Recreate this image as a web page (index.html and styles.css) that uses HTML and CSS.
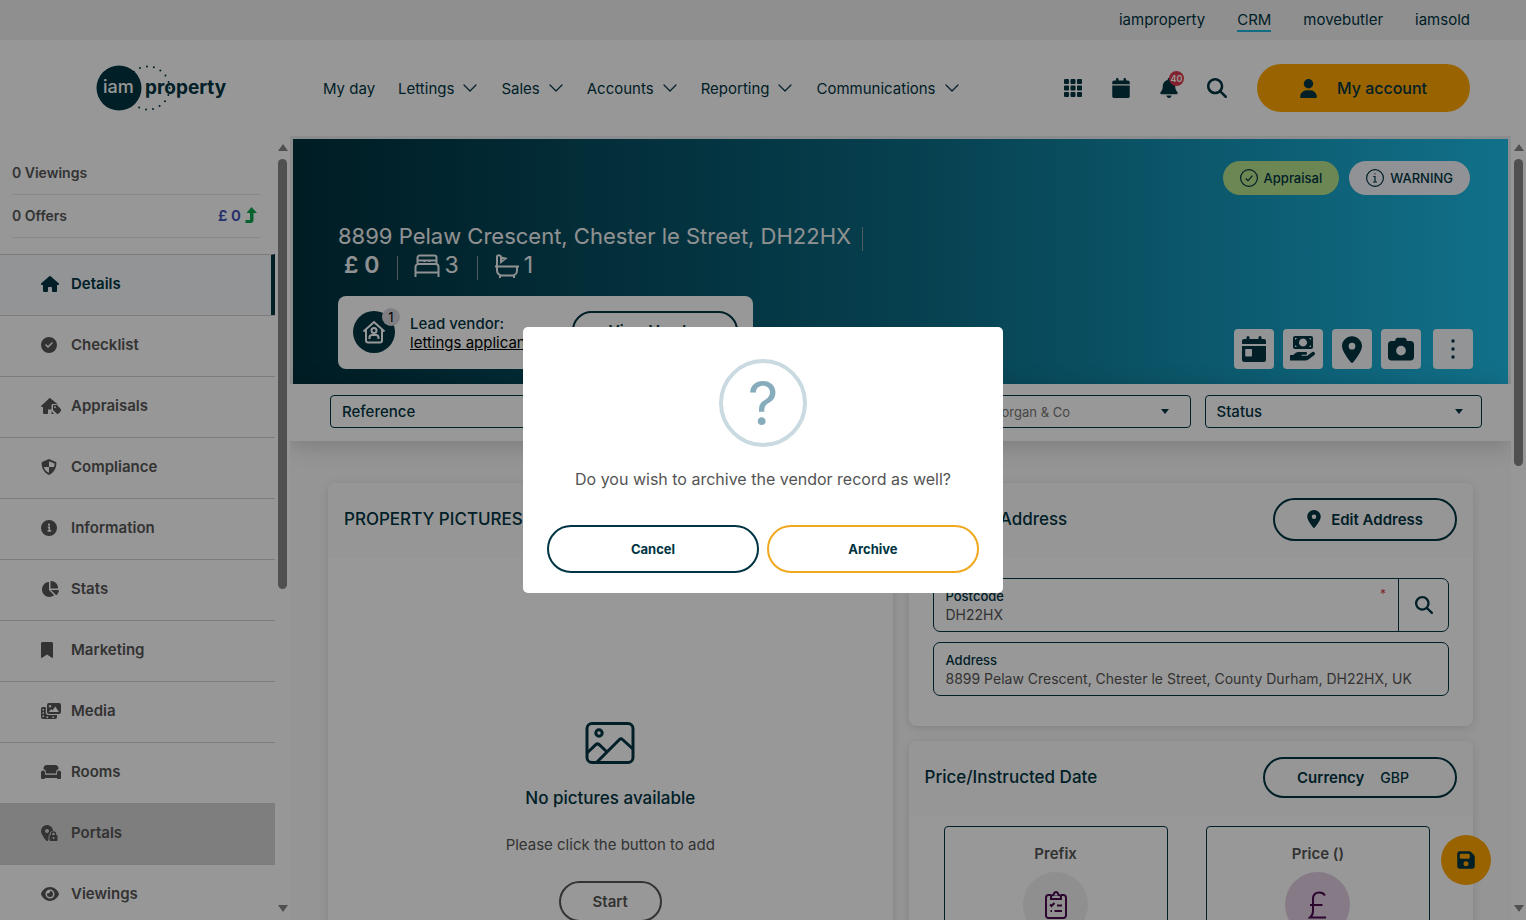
FILE: index.html
```html
<!DOCTYPE html>
<html lang="en">
  <head>
    <meta charset="UTF-8" />
    <meta name="viewport" content="width=device-width, initial-scale=1.0" />
    <title>Property Details - iamproperty CRM</title>
    <link rel="stylesheet" href="styles.css" />
  </head>
  <body>
    <svg class="sprite" aria-hidden="true">
      <symbol id="pin" viewBox="0 0 384 512"><path d="M215.7 499.2C267 435 384 279.4 384 192C384 86 298 0 192 0S0 86 0 192c0 87.4 117 243 168.3 307.2c12.3 15.3 35.1 15.3 47.4 0zM192 128a64 64 0 1 1 0 128 64 64 0 1 1 0-128z" /></symbol>
      <symbol id="search" viewBox="0 0 512 512"><path d="M416 208c0 45.9-14.9 88.3-40 122.7L502.6 457.4c12.5 12.5 12.5 32.8 0 45.3s-32.8 12.5-45.3 0L330.7 376c-34.4 25.2-76.8 40-122.7 40C93.1 416 0 322.9 0 208S93.1 0 208 0S416 93.1 416 208zM208 352a144 144 0 1 0 0-288 144 144 0 1 0 0 288z" /></symbol>
      <symbol id="chevron" viewBox="0 0 16 16"><path d="M2 5l6 6 6-6" fill="none" stroke="currentColor" stroke-width="1.2" stroke-linecap="round" stroke-linejoin="round" /></symbol>
    </svg>

    <div class="app">
      <nav class="topbar" aria-label="Sites">
        <a href="#">iamproperty</a>
        <a href="#" class="current">CRM</a>
        <a href="#">movebutler</a>
        <a href="#">iamsold</a>
      </nav>

      <header class="header">
        <a href="#" class="logo" aria-label="iamproperty">
          <svg width="134" height="48" viewBox="0 0 134 48">
            <circle cx="52" cy="24" r="21.5" fill="none" stroke="currentColor" stroke-width="2" stroke-linecap="round" stroke-dasharray="0 7.11" />
            <circle cx="23" cy="24" r="22.5" fill="currentColor" />
            <text x="7" y="29" class="logo-iam">iam</text>
            <text x="49" y="30" class="logo-property">property</text>
          </svg>
        </a>
        <nav class="main-nav" aria-label="Main">
          <a href="#">My day</a>
          <a href="#">Lettings <svg><use href="#chevron" /></svg></a>
          <a href="#">Sales <svg><use href="#chevron" /></svg></a>
          <a href="#">Accounts <svg><use href="#chevron" /></svg></a>
          <a href="#">Reporting <svg><use href="#chevron" /></svg></a>
          <a href="#">Communications <svg><use href="#chevron" /></svg></a>
        </nav>
        <div class="tools">
          <button type="button" aria-label="Apps">
            <svg width="18" height="18" viewBox="0 0 18 18"><path d="M1 0h3a1 1 0 0 1 1 1v3a1 1 0 0 1-1 1H1a1 1 0 0 1-1-1V1a1 1 0 0 1 1-1zM7.500 0h3a1 1 0 0 1 1 1v3a1 1 0 0 1-1 1h-3a1 1 0 0 1-1-1V1a1 1 0 0 1 1-1zM14 0h3a1 1 0 0 1 1 1v3a1 1 0 0 1-1 1h-3a1 1 0 0 1-1-1V1a1 1 0 0 1 1-1zM1 6.500h3a1 1 0 0 1 1 1v3a1 1 0 0 1-1 1H1a1 1 0 0 1-1-1v-3a1 1 0 0 1 1-1zM7.500 6.500h3a1 1 0 0 1 1 1v3a1 1 0 0 1-1 1h-3a1 1 0 0 1-1-1v-3a1 1 0 0 1 1-1zM14 6.500h3a1 1 0 0 1 1 1v3a1 1 0 0 1-1 1h-3a1 1 0 0 1-1-1v-3a1 1 0 0 1 1-1zM1 13h3a1 1 0 0 1 1 1v3a1 1 0 0 1-1 1H1a1 1 0 0 1-1-1v-3a1 1 0 0 1 1-1zM7.500 13h3a1 1 0 0 1 1 1v3a1 1 0 0 1-1 1h-3a1 1 0 0 1-1-1v-3a1 1 0 0 1 1-1zM14 13h3a1 1 0 0 1 1 1v3a1 1 0 0 1-1 1h-3a1 1 0 0 1-1-1v-3a1 1 0 0 1 1-1z" /></svg>
          </button>
          <button type="button" aria-label="Calendar">
            <svg width="18" height="20" viewBox="0 0 448 512"><path d="M96 32V64H48C21.500 64 0 85.500 0 112v48H448V112c0-26.500-21.500-48-48-48H352V32c0-17.700-14.300-32-32-32s-32 14.300-32 32V64H160V32c0-17.700-14.300-32-32-32S96 14.300 96 32zM448 192H0V464c0 26.500 21.500 48 48 48H400c26.500 0 48-21.500 48-48V192z" /></svg>
          </button>
          <button type="button" class="bell" aria-label="Notifications">
            <svg width="18" height="20" viewBox="0 0 448 512"><path d="M224 0c-17.700 0-32 14.300-32 32V51.200C119 66 64 130.600 64 208v18.800c0 47-17.300 92.400-48.500 127.600l-7.400 8.300c-8.400 9.400-10.400 22.900-5.300 34.400S19.400 416 32 416H416c12.600 0 24-7.400 29.200-18.900s3.100-25-5.300-34.400l-7.400-8.300C401.300 319.200 384 273.900 384 226.800V208c0-77.400-55-142-128-156.800V32c0-17.700-14.300-32-32-32zm45.300 493.300c12-12 18.700-28.300 18.700-45.300H224 160c0 17 6.700 33.300 18.700 45.300s28.300 18.700 45.300 18.700s33.300-6.700 45.300-18.700z" /></svg>
            <span class="bell-count">40</span>
          </button>
          <button type="button" aria-label="Search">
            <svg width="20" height="20"><use href="#search" /></svg>
          </button>
        </div>
        <button type="button" class="account">
          <svg width="17" height="19" viewBox="0 0 448 512"><path d="M224 256A128 128 0 1 0 224 0a128 128 0 1 0 0 256zm-45.700 48C79.800 304 0 383.800 0 482.300C0 498.700 13.300 512 29.700 512H418.300c16.400 0 29.700-13.300 29.700-29.700C448 383.800 368.200 304 269.700 304H178.300z" /></svg>
          My account
        </button>
      </header>

      <div class="layout">
        <aside class="sidebar">
          <div class="stats">
            <div class="stat">0 Viewings</div>
            <div class="stat">
              0 Offers
              <span class="stat-value">£ 0
                <svg width="12" height="16" viewBox="0 0 12 16"><path d="M6.500 0L12 6H8.500v7a3 3 0 0 1-3 3H0.500v-3H5V6H1.500z" /></svg>
              </span>
            </div>
          </div>
          <nav class="side-nav" aria-label="Property">
            <a href="#" class="active">
              <svg width="18" height="16" viewBox="0 0 576 512"><path d="M575.800 255.500c0 18-15 32.100-32 32.100h-32l.7 200.300c0 13-10 24-24 24H392c-22 0-40-18-40-40v-88c0-17.700-14.300-32-32-32h-64c-17.700 0-32 14.300-32 32v88c0 22-18 40-40 40H104c-22 0-40-18-40-40V287.600H32c-18 0-32-14-32-32.100c0-9 3-17 10-24L266.400 8c7-7 15-8 22-8s15 2 21 7L564.800 231.500c8 7 12 15 11 24z" /></svg>
              Details
            </a>
            <a href="#">
              <svg width="16" height="16" viewBox="0 0 512 512"><path d="M256 512A256 256 0 1 0 256 0a256 256 0 1 0 0 512zM369 209L241 337c-9.400 9.400-24.600 9.400-33.900 0l-64-64c-9.400-9.400-9.400-24.600 0-33.900s24.600-9.400 33.900 0l47 47L335 175c9.400-9.400 24.600-9.400 33.900 0s9.400 24.600 0 33.900z" /></svg>
              Checklist
            </a>
            <a href="#">
              <svg width="20" height="16" viewBox="0 0 20 16"><path d="M9 0l8 6.500-2.500-.5h-3.300L10.500 7v6l2.500 3h-1.500c-.6 0-1-.4-1-1v-3.500H7V15c0 .6-.4 1-1 1H3.300c-.7 0-1.300-.6-1.300-1.300V9H.7C0 9 0 8 .3 7.700L8 .5c.3-.4.700-.5 1-.5z" /><path d="M12 7h4l4 4.200c.5.600.5 1.200 0 1.700L17.300 15.700c-.5.4-1 .4-1.500 0L12 12zm2 1.200a.9.900 0 1 0 .01 0z" fill-rule="evenodd" /></svg>
              Appraisals
            </a>
            <a href="#">
              <svg width="16" height="16" viewBox="0 0 16 16"><path fill-rule="evenodd" d="M8 0l6.400 2.700c.6.200 1 .8 1 1.500C15.300 8.500 13.500 13.500 8 16 2.500 13.500.7 8.500.6 4.200c0-.7.4-1.300 1-1.500zM8 2.200V8H2.900c.5 2.300 2.100 4.500 5.100 5.800V8h5.100c.3-1.200.4-2.300.4-3.600z" /></svg>
              Compliance
            </a>
            <a href="#">
              <svg width="16" height="16" viewBox="0 0 16 16"><path fill-rule="evenodd" d="M8 0a8 8 0 1 1 0 16A8 8 0 0 1 8 0zM6.800 6.500v1.400h.7v2.300h-1v1.500h3.800v-1.500H9.100V6.500zM8 3.500a1.100 1.100 0 1 0 .01 0z" /></svg>
              Information
            </a>
            <a href="#">
              <svg width="18" height="16" viewBox="0 0 576 512"><path d="M304 240V16.600c0-9 7-16.600 16-16.600C443.700 0 544 100.300 544 224c0 9-7.600 16-16.600 16H304zM32 272C32 150.700 122.100 50.300 239 34.300c9.200-1.300 17 6.100 17 15.400V288L412.500 444.500c6.700 6.700 6.200 17.700-1.500 23.100C371.800 495.600 323.800 512 272 512C139.500 512 32 404.600 32 272zm526.400 16c9.300 0 16.600 7.800 15.400 17c-7.700 55.900-34.600 105.600-73.900 142.300c-6 5.600-15.400 5.200-21.200-.7L320 288H558.400z" /></svg>
              Stats
            </a>
            <a href="#">
              <svg width="12" height="16" viewBox="0 0 384 512"><path d="M0 48V487.700C0 501.100 10.900 512 24.300 512c5 0 9.900-1.500 14-4.400L192 400 345.700 507.600c4.100 2.900 9 4.400 14 4.400c13.400 0 24.300-10.900 24.300-24.300V48c0-26.500-21.500-48-48-48H48C21.500 0 0 21.500 0 48z" /></svg>
              Marketing
            </a>
            <a href="#">
              <svg width="20" height="16" viewBox="0 0 20 16"><path fill-rule="evenodd" d="M8 0h10a2 2 0 0 1 2 2v7a2 2 0 0 1-2 2H8a2 2 0 0 1-2-2V2a2 2 0 0 1 2-2zm-.2 9H18l-3.700-5.600-2.800 4-1.200-1.300zM9 2a1.200 1.200 0 1 0 .01 0z" /><path fill-rule="evenodd" d="M2 4h2.800v5.500A2.500 2.500 0 0 0 7.300 12H16v2a2 2 0 0 1-2 2H2a2 2 0 0 1-2-2V6a2 2 0 0 1 2-2zm-.5 2v1.500H3V6zm0 3.200v1.500H3V9.200zm0 3.300V14H3v-1.500zm4 1V15H7v-1.500zm6 0V15H13v-1.500z" /></svg>
              Media
            </a>
            <a href="#">
              <svg width="20" height="16" viewBox="0 0 20 16"><path d="M6 1h8a3.500 3.500 0 0 1 3.500 3.500v.8c-1.400.2-2.300 1.200-2.300 2.700v1.500H4.800V8c0-1.500-.9-2.500-2.300-2.700v-.8A3.500 3.500 0 0 1 6 1z" /><path d="M2 6.500a2 2 0 0 1 2 2v2.200h12V8.500a2 2 0 1 1 4 0V14a1 1 0 0 1-1 1h-2a1 1 0 0 1-1-1H4a1 1 0 0 1-1 1H1a1 1 0 0 1-1-1V8.500a2 2 0 0 1 2-2z" /></svg>
              Rooms
            </a>
            <a href="#" class="hovered">
              <svg width="17" height="16" viewBox="0 0 17 16"><path fill-rule="evenodd" d="M6 0a6 6 0 0 1 6 5.700c-2 .2-3.200 1.700-3.200 3.500C8 9.600 7.600 10.200 7.600 11v3.600l-.9 1.100c-.4.400-1 .4-1.400 0C3.500 13.500 0 8.800 0 6a6 6 0 0 1 6-6zm0 4a2 2 0 1 0 .01 0z" /><path fill-rule="evenodd" d="M9.800 10V9a2.700 2.700 0 0 1 5.400 0v1h.3c.6 0 1 .4 1 1v4c0 .6-.4 1-1 1h-6c-.6 0-1-.4-1-1v-4c0-.6.400-1 1-1zm1.400 0h2.600V9a1.300 1.300 0 0 0-2.600 0zm1.300 2a1 1 0 1 0 .01 0z" /></svg>
              Portals
            </a>
            <a href="#">
              <svg width="18" height="16" viewBox="0 0 18 16"><path fill-rule="evenodd" d="M9 1c4.500 0 7.500 3.300 8.900 6.400.1.400.1.800 0 1.200C16.500 11.700 13.500 15 9 15S1.500 11.700.1 8.600a1.600 1.600 0 0 1 0-1.200C1.500 4.300 4.500 1 9 1zm0 2.500a4.500 4.500 0 1 0 0 9 4.500 4.500 0 0 0 0-9zM9 5a3 3 0 1 1-2.900 2.200A2 2 0 0 0 9 5z" /></svg>
              Viewings
            </a>
          </nav>
        </aside>
        <div class="rail" aria-hidden="true">
          <span class="rail-up"></span>
          <span class="rail-thumb rail-thumb-long"></span>
          <span class="rail-down"></span>
        </div>

        <main class="main">
          <section class="hero">
            <div class="pills">
              <span class="pill pill-green">
                <svg width="18" height="18" viewBox="0 0 18 18"><circle cx="9" cy="9" r="8.400" /><path d="M5.700 9.500l2.300 2.200 4.500-5" /></svg>
                Appraisal
              </span>
              <span class="pill">
                <svg width="18" height="18" viewBox="0 0 18 18"><circle cx="9" cy="9" r="8.400" /><path d="M7.300 7.500H9V13M7 13h4M8.900 4.300v1" /></svg>
                WARNING
              </span>
            </div>
            <h1 class="address">8899 Pelaw Crescent, Chester le Street, DH22HX</h1>
            <ul class="facts">
              <li class="price">£ 0</li>
              <li>
                <svg width="26" height="24" viewBox="0 0 26 24"><path d="M3.500 10V3.500a2 2 0 0 1 2-2h15a2 2 0 0 1 2 2V10M1.500 23V13a3 3 0 0 1 3-3h17a3 3 0 0 1 3 3v10M1.500 18.500h23M3.500 6.500h19M10.500 6.500V8M15.500 6.500V8" /></svg>
                3
              </li>
              <li>
                <svg width="26" height="24" viewBox="0 0 26 24"><path d="M1 12.500h24M3 12.500v4a5 5 0 0 0 5 5h10a5 5 0 0 0 5-5v-4M6 21.500V24M20 21.500V24M3 12.500V3c0-2.500 3.500-2.500 4 0M7 8V3.500l4.500 1z" /></svg>
                1
              </li>
            </ul>
            <div class="hero-row">
              <div class="vendor">
                <span class="vendor-icon">
                  <svg width="24" height="24" viewBox="0 0 24 24"><path d="M1.500 11.500L12 2l10.500 9.500M4 9.500v11a2 2 0 0 0 2 2h12a2 2 0 0 0 2-2v-11M7.500 19v-1.500a2.500 2.500 0 0 1 2.500-2.500h4a2.500 2.500 0 0 1 2.500 2.500V19" /><circle cx="12" cy="10.500" r="2.500" /></svg>
                  <span class="vendor-count">1</span>
                </span>
                <div class="vendor-text">
                  Lead vendor:<br />
                  <a href="#">lettings applicant</a>
                </div>
                <button type="button" class="outline vendor-button">View Vendor</button>
              </div>
              <div class="actions">
                <button type="button" aria-label="Book appointment">
                  <svg width="24" height="26" viewBox="0 0 24 26"><path d="M6 0a1.500 1.500 0 0 1 1.500 1.500V3h9V1.500a1.500 1.500 0 0 1 3 0V3H22a2 2 0 0 1 2 2v3H0V5a2 2 0 0 1 2-2h2.500V1.500A1.500 1.500 0 0 1 6 0z" /><path fill-rule="evenodd" d="M0 10h24v13.500a2.500 2.500 0 0 1-2.500 2.500h-19A2.500 2.500 0 0 1 0 23.500zm4 3a.8.800 0 0 0-.8.800v5.900c0 .4.400.8.800.8h5.200c.4 0 .8-.4.800-.8v-5.900c0-.4-.4-.8-.8-.8z" /></svg>
                </button>
                <button type="button" aria-label="Offers">
                  <svg width="26" height="26" viewBox="0 0 26 26"><path fill-rule="evenodd" d="M5 0h16a2 2 0 0 1 2 2v9a2 2 0 0 1-2 2H5a2 2 0 0 1-2-2V2a2 2 0 0 1 2-2zm8 2.500a4 4 0 1 0 .01 0zM5 2v2l2-2zm16 0h-2l2 2zM5 11h2L5 9zm16 0V9l-2 2z" /><path d="M0 19h3.200l2.300-1.900a5 5 0 0 1 3.200-1.100h7a1.400 1.400 0 0 1 0 2.800h-4v.9h5.600l5-3.600a1.800 1.800 0 0 1 2.100 2.900l-6 4.400a5 5 0 0 1-3 1H0z" /></svg>
                </button>
                <button type="button" aria-label="Location">
                  <svg width="20" height="27"><use href="#pin" /></svg>
                </button>
                <button type="button" aria-label="Photos">
                  <svg width="26" height="26" viewBox="0 0 512 512"><path d="M149.100 64.800L138.700 96H64C28.700 96 0 124.700 0 160V416c0 35.300 28.700 64 64 64H448c35.300 0 64-28.700 64-64V160c0-35.300-28.700-64-64-64H373.300L362.900 64.800C356.400 45.200 338.100 32 317.400 32H194.600c-20.700 0-39 13.200-45.500 32.800zM256 192a96 96 0 1 1 0 192 96 96 0 1 1 0-192z" /></svg>
                </button>
                <button type="button" class="more" aria-label="More">
                  <svg width="4" height="20" viewBox="0 0 4 20"><circle cx="2" cy="2" r="1.700" /><circle cx="2" cy="10" r="1.700" /><circle cx="2" cy="18" r="1.700" /></svg>
                </button>
              </div>
            </div>
          </section>

          <div class="filters">
            <select aria-label="Reference"><option>Reference</option></select>
            <select aria-label="Type"><option>Type</option></select>
            <div class="filter-field">
              <label for="branch">Branch</label>
              <select id="branch"><option>Morgan &amp; Co</option></select>
            </div>
            <select aria-label="Status"><option>Status</option></select>
          </div>

          <div class="content">
            <section class="card pictures">
              <div class="card-head"><h2>PROPERTY PICTURES</h2></div>
              <div class="empty">
                <svg width="50" height="42" viewBox="0 0 50 42"><rect x="2" y="1.500" width="46" height="39" rx="5" /><circle cx="14" cy="11" r="3.200" /><path d="M2 31l9-8.500c1-.8 2-.8 3 0l7 6.500M12 40l22.500-22.500c1-1 2-1 3 0L48 27" /></svg>
                <h3>No pictures available</h3>
                <p>Please click the button to add</p>
                <button type="button" class="outline start">Start</button>
              </div>
            </section>

            <div class="column">
              <section class="card">
                <div class="card-head">
                  <h2>Property Address</h2>
                  <button type="button" class="outline edit-address">
                    <svg width="14" height="18"><use href="#pin" /></svg>
                    Edit Address
                  </button>
                </div>
                <div class="fields">
                  <div class="field-group">
                    <div class="field">
                      <label for="postcode">Postcode</label>
                      <input type="text" id="postcode" value="DH22HX" />
                      <span class="required">*</span>
                    </div>
                    <button type="button" aria-label="Find address">
                      <svg width="18" height="18"><use href="#search" /></svg>
                    </button>
                  </div>
                  <div class="field-group">
                    <div class="field">
                      <label for="address">Address</label>
                      <input type="text" id="address" value="8899 Pelaw Crescent, Chester le Street, County Durham, DH22HX, UK" />
                    </div>
                  </div>
                </div>
              </section>

              <section class="card">
                <div class="card-head">
                  <h2>Price/Instructed Date</h2>
                  <button type="button" class="outline currency">Currency <span>GBP</span></button>
                </div>
                <div class="tiles">
                  <div class="tile">
                    <h3>Prefix</h3>
                    <span class="tile-icon">
                      <svg width="22" height="28" viewBox="0 0 22 28"><path d="M6 4H3.500A2.500 2.500 0 0 0 1 6.500v18A2.500 2.500 0 0 0 3.500 27h15a2.500 2.500 0 0 0 2.500-2.500v-18A2.500 2.500 0 0 0 18.500 4H16M6 8V6c0-1.500 1-2 2.500-2C9 2 10 1 11 1s2 1 2.500 3c1.500 0 2.500.5 2.500 2v2zM11 4.500v.5M5 13.500l1.500 1.500 3-3M12 14.500h5M5.500 20h1.500M9.500 20H17" /></svg>
                    </span>
                  </div>
                  <div class="tile">
                    <h3>Price ()</h3>
                    <span class="tile-icon tile-icon-pink">
                      <svg width="20" height="28" viewBox="0 0 20 28"><path d="M17 4.500C15.500 2 13.500 1.500 11.500 1.500 7.500 1.500 5 4 5 8v12c0 3-1 5-3 6.500h16M2 14h12.500" /></svg>
                    </span>
                  </div>
                </div>
              </section>
            </div>
          </div>
        </main>
        <div class="rail" aria-hidden="true">
          <span class="rail-up"></span>
          <span class="rail-thumb"></span>
          <span class="rail-down"></span>
        </div>
      </div>

      <button type="button" class="save" aria-label="Save">
        <svg width="18" height="20" viewBox="0 0 448 512"><path d="M64 32C28.700 32 0 60.700 0 96V416c0 35.300 28.700 64 64 64H384c35.300 0 64-28.700 64-64V173.300c0-17-6.700-33.300-18.700-45.300L352 50.700C340 38.700 323.700 32 306.700 32H64zm0 96c0-17.700 14.300-32 32-32H288c17.700 0 32 14.300 32 32v64c0 17.700-14.300 32-32 32H96c-17.700 0-32-14.300-32-32V128zM224 288a64 64 0 1 1 0 128 64 64 0 1 1 0-128z" /></svg>
      </button>
    </div>

    <div class="overlay">
      <div class="modal" role="dialog" aria-modal="true" aria-labelledby="modal-text">
        <div class="modal-icon">?</div>
        <p id="modal-text">Do you wish to archive the vendor record as well?</p>
        <div class="modal-buttons">
          <button type="button">Cancel</button>
          <button type="button" class="archive">Archive</button>
        </div>
      </div>
    </div>
  </body>
</html>
```
FILE: styles.css
```css
:root {
  --navy: #003442;
  --orange: #ffa600;
  --text: #555555;
  --line: #cfcfcf;
  --pill: 24px;
}

* {
  margin: 0;
  padding: 0;
  box-sizing: border-box;
}

body {
  font-family: Inter, "Open Sans", sans-serif;
  font-size: 15px;
  color: var(--navy);
  background: #fcfcfc;
  overflow: hidden;
}

a {
  color: inherit;
  text-decoration: none;
}

button,
input,
select {
  font: inherit;
  color: inherit;
}

button {
  display: flex;
  align-items: center;
  justify-content: center;
  background: none;
  border: none;
  cursor: pointer;
}

svg {
  fill: currentColor;
  flex-shrink: 0;
}

.sprite {
  display: none;
}

.app {
  display: flex;
  flex-direction: column;
  height: 100vh;
}

/* Top bars */
.topbar {
  display: flex;
  justify-content: flex-end;
  align-items: center;
  gap: 32px;
  height: 40px;
  flex-shrink: 0;
  padding: 0 56px;
  background: #eeeeee;
}

.topbar a {
  padding-top: 2px;
  line-height: 20px;
  border-bottom: 2px solid transparent;
}

.topbar .current {
  border-color: #1eb4dc;
}

.header {
  display: flex;
  align-items: center;
  height: 96px;
  flex-shrink: 0;
  padding: 0 56px 0 96px;
}

.logo {
  display: flex;
}

.logo-iam {
  font-size: 18px;
  font-weight: 500;
  fill: #fcfcfc;
}

.logo-property {
  font-size: 19px;
  font-weight: 700;
}

.main-nav {
  display: flex;
  gap: 23px;
  margin-left: 93px;
}

.main-nav a {
  display: flex;
  align-items: center;
  gap: 8px;
}

.main-nav svg {
  width: 16px;
  height: 16px;
}

.tools {
  display: flex;
  gap: 28px;
  margin-left: auto;
}

.tools button {
  width: 20px;
  height: 24px;
}

.bell {
  position: relative;
}

.bell-count {
  position: absolute;
  top: -5px;
  left: 10px;
  width: 15px;
  border-radius: 50%;
  background: #d83a4e;
  color: #ffffff;
  font-size: 9px;
  font-weight: 600;
  line-height: 15px;
}

.account {
  gap: 20px;
  width: 213px;
  height: 48px;
  margin-left: 30px;
  border-radius: var(--pill);
  background: var(--orange);
  font-size: 16px;
  font-weight: 500;
}

/* Sidebar */
.layout {
  display: flex;
  flex: 1;
  min-height: 0;
}

.sidebar {
  width: 275px;
  flex-shrink: 0;
  overflow: hidden;
  color: var(--text);
  font-weight: 600;
}

.stats {
  padding: 16px 14px 16px 12px;
}

.stat {
  display: flex;
  align-items: center;
  justify-content: space-between;
  height: 43px;
  padding-bottom: 2px;
  border-bottom: 1px solid #e4e4e4;
  font-size: 14px;
}

.stat-value {
  display: flex;
  align-items: center;
  gap: 4px;
  padding-right: 4px;
  color: #3d50b0;
  font-size: 15px;
}

.stat-value svg {
  color: #0aa64e;
}

.side-nav a {
  display: grid;
  grid-template-columns: 30px 1fr;
  align-items: center;
  height: 61px;
  padding: 0 0 3px 41px;
  border-top: 1px solid var(--line);
}

.side-nav .active {
  color: var(--navy);
  background: #f5f7f9;
  border-right: 4px solid var(--navy);
}

.side-nav .hovered {
  background: #d3d3d3;
}

.rail {
  display: flex;
  flex-direction: column;
  align-items: center;
  width: 15px;
  flex-shrink: 0;
  padding: 8px 3px;
}

.rail-up,
.rail-down {
  border: 5px solid transparent;
}

.rail-up {
  border-top: none;
  border-bottom: 7px solid #858585;
}

.rail-down {
  margin-top: auto;
  border-bottom: none;
  border-top: 7px solid #858585;
}

.rail-thumb {
  width: 9px;
  height: 40%;
  margin-top: 8px;
  border-radius: 5px;
  background: #858585;
}

.rail-thumb-long {
  height: 56%;
}

/* Property banner */
.main {
  flex: 1;
  min-width: 0;
  overflow: hidden;
  background: #f8f8f8;
}

.hero {
  padding: 22px 35px 15px 45px;
  border: 3px solid #e6eaeb;
  border-bottom-width: 0;
  background: linear-gradient(90deg, #00303c, #0b6a83 50%, #1dbce6) padding-box;
  color: #f0f2f3;
}

.pills {
  display: flex;
  justify-content: flex-end;
  gap: 10px;
  padding-right: 3px;
}

.pill {
  display: flex;
  align-items: center;
  gap: 6px;
  height: 34px;
  padding: 0 17px;
  border-radius: 17px;
  background: #f2f4f8;
  color: var(--navy);
  font-size: 13px;
  font-weight: 500;
}

.pill-green {
  background: #b4e08c;
}

.pill svg {
  fill: none;
  stroke: currentColor;
  stroke-width: 1.2;
}

.address {
  width: fit-content;
  margin-top: 27px;
  padding-right: 12px;
  background: linear-gradient(#8799a0, #8799a0) right bottom / 1px 24px no-repeat;
  font-size: 22px;
  font-weight: 400;
  line-height: 29px;
}

.facts {
  display: flex;
  list-style: none;
  padding-left: 6px;
  font-size: 23px;
  line-height: 29px;
}

.facts li {
  display: flex;
  align-items: center;
  gap: 4px;
  padding-right: 18px;
}

.facts li + li {
  padding-left: 17px;
  background: linear-gradient(#8799a0, #8799a0) left bottom / 1px 24px no-repeat;
}

.facts .price {
  font-weight: 600;
}

.facts svg,
.vendor svg {
  fill: none;
  stroke: currentColor;
  stroke-width: 2;
}

.hero-row {
  display: flex;
  justify-content: space-between;
  align-items: flex-end;
  margin-top: 16px;
}

.vendor {
  display: flex;
  align-items: flex-start;
  width: 415px;
  height: 73px;
  padding: 15px;
  border-radius: 8px;
  background: #fefefe;
  color: var(--navy);
}

.vendor-icon {
  position: relative;
  display: grid;
  place-items: center;
  width: 42px;
  height: 42px;
  border-radius: 50%;
  background: var(--navy);
  color: #ffffff;
}

.vendor-count {
  position: absolute;
  top: -3px;
  right: -5px;
  width: 18px;
  border-radius: 50%;
  background: #d6d6dc;
  color: #000000;
  font-size: 13px;
  line-height: 18px;
  text-align: center;
}

.vendor-text {
  margin: 3px 0 0 15px;
  line-height: 19px;
  font-weight: 500;
}

.vendor-text a {
  color: #000000;
  font-weight: 400;
  text-decoration: underline;
}

.outline {
  gap: 10px;
  min-height: 41px;
  padding: 0 32px;
  border: 2px solid var(--navy);
  border-radius: var(--pill);
  font-size: 15px;
  font-weight: 600;
}

.vendor-button {
  width: 166px;
  min-height: 39px;
  margin-left: auto;
}

.edit-address {
  min-height: 43px;
}

.actions {
  display: flex;
  gap: 9px;
}

.actions button {
  width: 40px;
  height: 40px;
  border-radius: 4px;
  background: #f6f7f9;
  color: var(--navy);
}

.actions .more {
  margin-left: 3px;
}

/* Filters */
.filters {
  display: grid;
  grid-template-columns: repeat(4, 1fr);
  gap: 14px;
  padding: 11px 29px 13px 40px;
  background: #fefefe;
  box-shadow: 0 4px 24px rgba(0, 0, 0, 0.18);
}

.filters > select,
.filter-field {
  height: 33px;
  padding: 0 11px;
  border: 1px solid var(--navy);
  border-radius: 4px;
  font-weight: 500;
}

.filters select {
  appearance: none;
  background: url("data:image/svg+xml,%3Csvg xmlns='http://www.w3.org/2000/svg' width='8' height='5'%3E%3Cpath d='M0 0h8L4 5z' fill='%23003442'/%3E%3C/svg%3E") no-repeat right 18px center;
}

.filter-field {
  display: flex;
  align-items: center;
  gap: 14px;
  padding-right: 0;
}

.filter-field select {
  flex: 1;
  height: 100%;
  border: none;
  background-position: right 21px center;
  color: #777777;
  font-size: 13px;
  font-weight: 400;
}

/* Cards */
.content {
  display: grid;
  grid-template-columns: 1fr 1fr;
  gap: 16px;
  padding: 42px 38px 0;
}

.column {
  display: flex;
  flex-direction: column;
  gap: 15px;
}

.card {
  border-radius: 8px;
  background: #fefefe;
  box-shadow: 0 2px 10px rgba(0, 0, 0, 0.12);
}

.card-head {
  display: flex;
  align-items: center;
  justify-content: space-between;
  height: 75px;
  padding: 0 16px 3px;
  border-radius: 8px 8px 0 0;
  background: #fbfbfb;
}

.card-head h2 {
  font-size: 17px;
  font-weight: 500;
}

.empty {
  display: flex;
  flex-direction: column;
  align-items: center;
  padding: 164px 16px 40px;
}

.empty svg {
  fill: none;
  stroke: currentColor;
  stroke-width: 3;
}

.empty h3 {
  margin-top: 22px;
  font-size: 17px;
  font-weight: 500;
  line-height: 24px;
}

.empty p {
  margin: 23px 0 24px;
  color: var(--text);
  line-height: 24px;
}

.start {
  border-color: var(--text);
  color: var(--text);
}

.fields {
  display: flex;
  flex-direction: column;
  gap: 10px;
  padding: 20px 24px 30px;
}

.field-group {
  display: flex;
  height: 54px;
  border: 1px solid var(--navy);
  border-radius: 7px;
}

.field-group button {
  width: 50px;
  border-left: 1px solid var(--navy);
}

.field {
  position: relative;
  display: flex;
  flex-direction: column;
  flex: 1;
  min-width: 0;
  padding: 8px 12px;
}

.field label {
  font-size: 13px;
  font-weight: 500;
  line-height: 18px;
}

.field input {
  border: none;
  background: none;
  color: var(--text);
  font-size: 14px;
  line-height: 20px;
}

.required {
  position: absolute;
  top: 7px;
  right: 12px;
  color: #d83a4e;
  font-size: 12px;
}

.currency {
  gap: 16px;
}

.currency span {
  padding-right: 14px;
  font-size: 14px;
  font-weight: 500;
}

.tiles {
  display: grid;
  grid-template-columns: 1fr 1fr;
  gap: 38px;
  padding: 10px 43px 40px 35px;
}

.tile {
  display: flex;
  flex-direction: column;
  align-items: center;
  gap: 8px;
  height: 140px;
  padding-top: 16px;
  border: 1px solid var(--navy);
  border-radius: 4px;
}

.tile h3 {
  color: var(--text);
  font-size: 15px;
  font-weight: 600;
  line-height: 21px;
}

.tile-icon {
  display: grid;
  place-items: center;
  width: 65px;
  height: 65px;
  border-radius: 50%;
  background: #eeeeee;
  color: #4b0a50;
}

.tile-icon-pink {
  background: #e0cbdf;
}

.tile-icon svg {
  fill: none;
  stroke: currentColor;
  stroke-width: 2;
}

.save {
  position: fixed;
  right: 35px;
  bottom: 35px;
  width: 50px;
  height: 50px;
  border-radius: 50%;
  background: var(--orange);
  color: var(--navy);
}

/* Confirm dialog */
.overlay {
  position: fixed;
  inset: 0;
  display: flex;
  align-items: center;
  justify-content: center;
  background: rgba(0, 0, 0, 0.4);
}

.modal {
  width: 480px;
  max-width: 100%;
  padding: 32px 24px 20px;
  border-radius: 5px;
  background: #ffffff;
  text-align: center;
}

.modal-icon {
  width: 88px;
  height: 88px;
  margin: 0 auto 20px;
  border: 4px solid #c9dae1;
  border-radius: 50%;
  color: #87adbd;
  font-size: 60px;
  line-height: 80px;
}

.modal p {
  margin-bottom: 34px;
  color: #545454;
  font-size: 16px;
  line-height: 24px;
}

.modal-buttons {
  display: grid;
  grid-template-columns: 1fr 1fr;
  gap: 8px;
}

.modal-buttons button {
  height: 48px;
  border: 2px solid var(--navy);
  border-radius: var(--pill);
  font-size: 13px;
  font-weight: 700;
}

.modal-buttons .archive {
  border-color: #f0a81e;
}
```
